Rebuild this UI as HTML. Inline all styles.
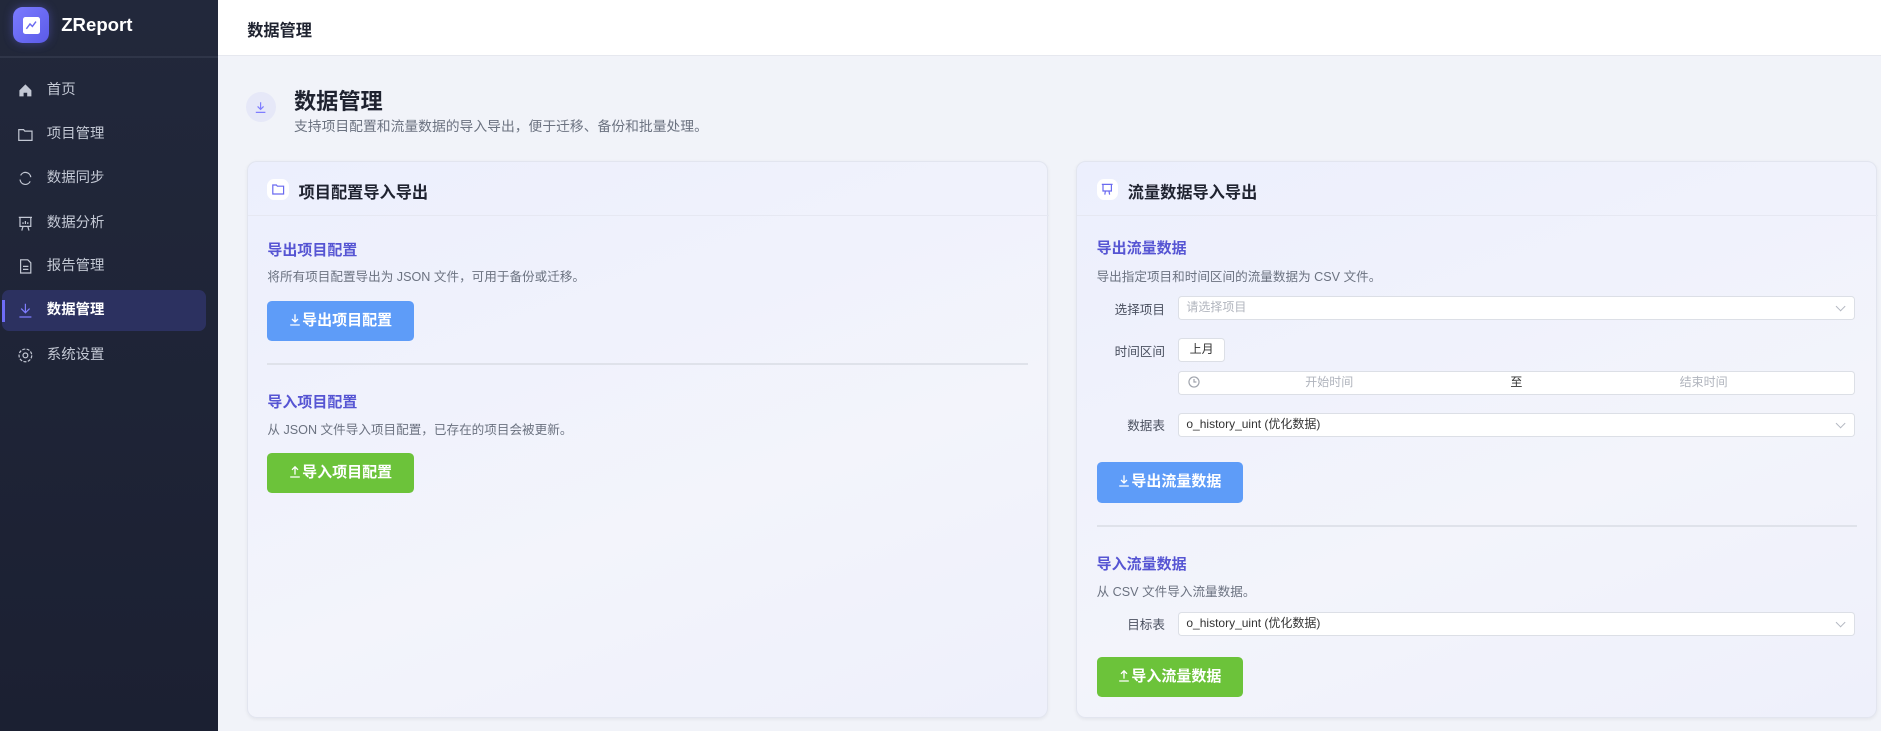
<!DOCTYPE html>
<html><head><meta charset="utf-8"><style>
*{box-sizing:border-box;margin:0;padding:0}
html,body{width:1881px;height:731px;overflow:hidden}
body{font-family:"Liberation Sans","Noto Sans CJK SC",sans-serif;background:#f1f3f9}
#w{zoom:1.2;width:1568px;height:610px;position:relative}
.a{position:absolute}
.sb{left:0;top:0;width:182px;height:610px;background:linear-gradient(#22283b,#1b2032)}
.nav{position:absolute;left:0;width:182px;height:34px;color:#c3c8d4;font-size:12px;line-height:34px}
.nav span{position:absolute;left:39px}
.nav svg{position:absolute;left:14px;top:10px}
.hd{left:182px;top:0;width:1386px;height:47px;background:#fff;border-bottom:1px solid #e6e8ef}
.card{border:1px solid #e2e5ef;border-radius:8px;background:linear-gradient(160deg,#eceffd,#f3f4fb 60%,#eef0fb);box-shadow:0 1px 3px rgba(0,0,0,.06)}
.ct{font-size:13.5px;font-weight:bold;color:#1f2330}
.h3{font-size:12.5px;font-weight:bold;color:#5655d3}
.ds{font-size:10.5px;color:#6b7280}
.btn{border-radius:4px;color:#fff;font-size:12.5px;font-weight:bold;text-align:center}
.btn svg{vertical-align:-1px;margin-right:1px}
.blue{background:#5e9cf8}.green{background:#6cc33a}
.lb{font-size:10.5px;color:#4b5160;text-align:right;width:60px}
.in{background:#fff;border:1px solid #dcdfe6;border-radius:3px;height:20px;font-size:10px;line-height:18px;padding-left:6px;color:#333}
.chev{position:absolute;right:8px;top:5px;width:6px;height:6px;border-right:1px solid #b4b8c2;border-bottom:1px solid #b4b8c2;transform:rotate(45deg)}
.ic{background:#fff;border-radius:6px;width:18px;height:18px}
</style></head><body><div id="w">
<div class="a sb">
 <div class="a" style="left:11px;top:6px;width:30px;height:30px;border-radius:8px;background:linear-gradient(135deg,#7b7bff,#5b5be8);box-shadow:0 0 8px rgba(110,110,250,.4)">
  <div class="a" style="left:8px;top:8px;width:14px;height:14px;background:#fff;border-radius:2px"></div>
  <svg class="a" style="left:9px;top:9px" width="12" height="12" viewBox="0 0 12 12"><path d="M2 9 L5 5 L7 7 L10 3" stroke="#6a6af0" fill="none" stroke-width="1.2"/></svg>
 </div>
 <div class="a" style="left:51px;top:12px;color:#fff;font-size:15.5px;font-weight:bold">ZReport</div>
 <div class="a" style="left:0;top:47px;width:182px;height:1px;background:#2f3548"></div>
 <div class="nav" style="top:58px"><svg width="14" height="14" viewBox="0 0 14 14"><path d="M2 7 L7 2 L12 7 V12 H8.5 V9 H5.5 V12 H2Z" fill="#c3c8d4"/></svg><span>首页</span></div>
 <div class="nav" style="top:95px"><svg width="14" height="14" viewBox="0 0 14 14"><path d="M1.5 3 H5.5 L6.5 4.3 H12.5 V12 H1.5Z" stroke="#c3c8d4" fill="none"/></svg><span>项目管理</span></div>
 <div class="nav" style="top:132px"><svg width="14" height="14" viewBox="0 0 14 14"><path d="M11.5 6 A4.5 4.5 0 0 0 3 4.5 M2.5 8 A4.5 4.5 0 0 0 11 9.5" stroke="#c3c8d4" fill="none"/></svg><span>数据同步</span></div>
 <div class="nav" style="top:169px"><svg width="14" height="14" viewBox="0 0 14 14"><path d="M1.5 2 H12.5 M2.5 2 V9.5 H11.5 V2 M5 9.5 L4 13 M9 9.5 L10 13 M5 7.5V6 M7 7.5V5 M9 7.5V6" stroke="#c3c8d4" fill="none"/></svg><span>数据分析</span></div>
 <div class="nav" style="top:205px"><svg width="14" height="14" viewBox="0 0 14 14"><path d="M3 1.5 H9 L11.5 4 V12.5 H3Z M5 7H9.5 M5 9.5H9.5" stroke="#c3c8d4" fill="none"/></svg><span>报告管理</span></div>
 <div class="a" style="left:2px;top:242px;width:170px;height:34px;border-radius:6px;background:#2c3160"></div>
 <div class="a" style="left:2px;top:250px;width:2px;height:18px;background:#6e6cf5"></div>
 <div class="nav" style="top:242px;color:#fff;font-weight:bold"><svg width="14" height="14" viewBox="0 0 14 14"><path d="M7 1.5 V9 M3.5 5.5 L7 9 L10.5 5.5 M2 12.5 H12" stroke="#7f7dff" fill="none"/></svg><span>数据管理</span></div>
 <div class="nav" style="top:279px"><svg width="14" height="14" viewBox="0 0 14 14"><circle cx="7" cy="7" r="2" stroke="#c3c8d4" fill="none"/><circle cx="7" cy="7" r="5.3" stroke="#c3c8d4" fill="none" stroke-dasharray="2.5 1.2"/></svg><span>系统设置</span></div>
</div>
<div class="a hd"><div class="a" style="left:24px;top:14px;font-size:13.5px;font-weight:bold;color:#1f2330">数据管理</div></div>

<div class="a" style="left:205px;top:77px;width:25px;height:25px;border-radius:50%;background:#e6e8f8"></div>
<svg class="a" style="left:212px;top:84px" width="11" height="11" viewBox="0 0 11 11"><path d="M5.5 1 V7 M3 4.5 L5.5 7 L8 4.5 M1.5 9.5 H9.5" stroke="#7f7dff" fill="none"/></svg>
<div class="a" style="left:245px;top:70px;font-size:18.5px;font-weight:bold;color:#1f2330">数据管理</div>
<div class="a" style="left:245px;top:96px;font-size:11.5px;color:#6b7280">支持项目配置和流量数据的导入导出，便于迁移、备份和批量处理。</div>

<div class="a card" style="left:206px;top:134px;width:667px;height:464px">
 <div class="a ic" style="left:16px;top:14px"></div>
 <svg class="a" style="left:19px;top:17px" width="12" height="12" viewBox="0 0 12 12"><path d="M1.5 2.5 H4.5 L5.3 3.5 H10.5 V10 H1.5Z" stroke="#6a6af0" fill="none"/></svg>
 <div class="a ct" style="left:42px;top:14px">项目配置导入导出</div>
 <div class="a" style="left:0;top:44px;width:667px;height:1px;background:#e6e8f2"></div>
 <div class="a h3" style="left:16px;top:64px">导出项目配置</div>
 <div class="a ds" style="left:16px;top:87px">将所有项目配置导出为 JSON 文件，可用于备份或迁移。</div>
 <div class="a btn blue" style="left:16px;top:116px;width:122px;height:33px;line-height:33px"><svg width="10" height="11" viewBox="0 0 10 11"><path d="M5 1V7.5M2.5 5L5 7.5L7.5 5M1 10H9" stroke="#fff" fill="none" stroke-width="1.1"/></svg>导出项目配置</div>
 <div class="a" style="left:16px;top:168px;width:634px;height:1px;background:#dfe2ea"></div>
 <div class="a h3" style="left:16px;top:191px">导入项目配置</div>
 <div class="a ds" style="left:16px;top:214px">从 JSON 文件导入项目配置，已存在的项目会被更新。</div>
 <div class="a btn green" style="left:16px;top:243px;width:122px;height:33px;line-height:33px"><svg width="10" height="11" viewBox="0 0 10 11"><path d="M5 8V1.5M2.5 4L5 1.5L7.5 4M1 10H9" stroke="#fff" fill="none" stroke-width="1.1"/></svg>导入项目配置</div>
</div>

<div class="a card" style="left:897px;top:134px;width:667px;height:464px">
 <div class="a ic" style="left:16px;top:14px"></div>
 <svg class="a" style="left:19px;top:17px" width="12" height="12" viewBox="0 0 12 12"><path d="M1.5 2 H10.5 M2.5 2 V7.5 H9.5 V2 M4.5 7.5 L4 10.5 M7.5 7.5 L8 10.5" stroke="#6a6af0" fill="none"/></svg>
 <div class="a ct" style="left:42px;top:14px">流量数据导入导出</div>
 <div class="a" style="left:0;top:44px;width:667px;height:1px;background:#e6e8f2"></div>
 <div class="a h3" style="left:16px;top:63px">导出流量数据</div>
 <div class="a ds" style="left:16px;top:87px">导出指定项目和时间区间的流量数据为 CSV 文件。</div>
 <div class="a lb" style="left:13px;top:114px">选择项目</div>
 <div class="a in" style="left:84px;top:112px;width:564px;color:#b0b4bd">请选择项目<div class="chev"></div></div>
 <div class="a lb" style="left:13px;top:149px">时间区间</div>
 <div class="a in" style="left:84px;top:147px;width:39px;padding:0;text-align:center;color:#333">上月</div>
 <div class="a in" style="left:84px;top:174px;width:564px;color:#b0b4bd">
  <svg class="a" style="left:7px;top:4px" width="10" height="10" viewBox="0 0 10 10"><circle cx="5" cy="5" r="4.2" stroke="#a0a4ad" fill="none"/><path d="M5 2.5V5H7" stroke="#a0a4ad" fill="none"/></svg>
  <span class="a" style="left:105px">开始时间</span><span class="a" style="left:276px;color:#333">至</span><span class="a" style="left:417px">结束时间</span></div>
 <div class="a lb" style="left:13px;top:211px">数据表</div>
 <div class="a in" style="left:84px;top:209px;width:564px">o_history_uint (优化数据)<div class="chev"></div></div>
 <div class="a btn blue" style="left:16px;top:250px;width:122px;height:34px;line-height:34px"><svg width="10" height="11" viewBox="0 0 10 11"><path d="M5 1V7.5M2.5 5L5 7.5L7.5 5M1 10H9" stroke="#fff" fill="none" stroke-width="1.1"/></svg>导出流量数据</div>
 <div class="a" style="left:16px;top:303px;width:634px;height:1px;background:#dfe2ea"></div>
 <div class="a h3" style="left:16px;top:326px">导入流量数据</div>
 <div class="a ds" style="left:16px;top:349px">从 CSV 文件导入流量数据。</div>
 <div class="a lb" style="left:13px;top:377px">目标表</div>
 <div class="a in" style="left:84px;top:375px;width:564px">o_history_uint (优化数据)<div class="chev"></div></div>
 <div class="a btn green" style="left:16px;top:413px;width:122px;height:33px;line-height:33px"><svg width="10" height="11" viewBox="0 0 10 11"><path d="M5 8V1.5M2.5 4L5 1.5L7.5 4M1 10H9" stroke="#fff" fill="none" stroke-width="1.1"/></svg>导入流量数据</div>
</div>
</div></body></html>
